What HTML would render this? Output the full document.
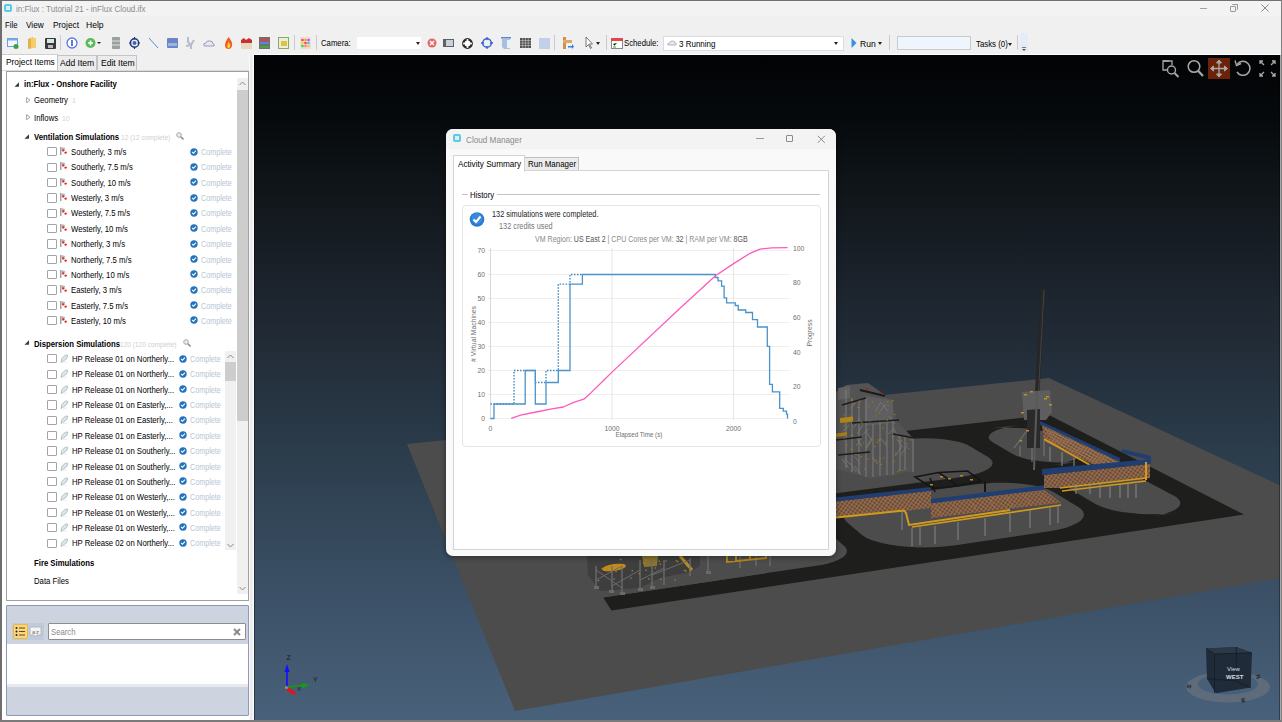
<!DOCTYPE html>
<html><head><meta charset="utf-8">
<style>
*{margin:0;padding:0;box-sizing:border-box}
html,body{width:1282px;height:722px;overflow:hidden;background:#f0f0f0;font-family:"Liberation Sans",sans-serif;font-size:9px;color:#000}
.a{position:absolute}
.t{position:absolute;white-space:nowrap;line-height:1;font-size:9px;transform-origin:0 0;transform:scaleX(.86)}
.b{font-weight:bold}
.sep{position:absolute;top:35px;width:1px;height:15px;background:#c8ccd2}
.ic{position:absolute;top:37px}
</style></head><body>
<!-- window frame -->
<div class="a" style="left:0;top:0;width:1282px;height:1px;background:#707070"></div>
<div class="a" style="left:0;top:0;width:2px;height:722px;background:#6e6e6e"></div>
<div class="a" style="left:1281px;top:0;width:1px;height:722px;background:#8a8a8a"></div>
<div class="a" style="left:0;top:720px;width:1282px;height:2px;background:#7a7a7a"></div>
<!-- title bar -->
<div class="a" style="left:2px;top:1px;width:1279px;height:15px;background:#f3f3f3"></div>
<div class="a" style="left:4px;top:4px;width:8px;height:8px;border:2px solid #5cc8ea;border-radius:2px;background:#d8f0e8"></div>
<div class="t" style="left:15.5px;top:4.5px;color:#8c8c8c;transform:scaleX(.89)">in:Flux : Tutorial 21 - inFlux Cloud.ifx</div>
<div class="a" style="left:1200px;top:7.5px;width:7px;height:1px;background:#a4a4a4"></div>
<div class="a" style="left:1230px;top:5.5px;width:6px;height:6px;border:1px solid #9a9a9a;border-radius:1px"></div>
<div class="a" style="left:1232px;top:4px;width:5.5px;height:5.5px;border-top:1px solid #9a9a9a;border-right:1px solid #9a9a9a;border-radius:1px"></div>
<svg class="a" style="left:1261px;top:4px" width="9" height="9"><path d="M0.5 0.5L7.5 7.5M7.5 0.5L0.5 7.5" stroke="#8a8a8a" stroke-width="1"/></svg>
<!-- menu -->
<div class="t" style="left:5px;top:21px">File</div>
<div class="t" style="left:26px;top:21px;transform:scaleX(.92)">View</div>
<div class="t" style="left:52.5px;top:21px;transform:scaleX(.93)">Project</div>
<div class="t" style="left:86px;top:21px;transform:scaleX(.95)">Help</div>
<!-- toolbar -->
<svg class="ic" style="left:7px" width="12" height="12"><rect x="0.5" y="1.5" width="10" height="8" fill="#f4f8fc" stroke="#6a9ee0"/><rect x="0.5" y="1.5" width="10" height="2" fill="#7aa8e6"/><circle cx="9" cy="9.5" r="2.5" fill="#3fa040"/></svg>
<svg class="ic" style="left:27px" width="10" height="12"><path d="M1 2L6 0V11L1 12Z" fill="#e3b04a"/><path d="M4 1H9V11H4Z" fill="#f3ce6c"/></svg>
<svg class="ic" style="left:45px;top:38px" width="11" height="11"><rect x="0" y="0" width="11" height="11" rx="1" fill="#3a3a3a"/><rect x="2" y="1" width="7" height="4" fill="#d8e6ea"/><rect x="3" y="7" width="5" height="3" fill="#bbb"/></svg>
<div class="sep" style="left:60px"></div>
<svg class="ic" style="left:66px;top:37px" width="12" height="12"><circle cx="6" cy="6" r="5" fill="#fff" stroke="#5a78e8" stroke-width="1.3"/><path d="M6 3V9" stroke="#2040c0" stroke-width="1.4"/></svg>
<svg class="ic" style="left:85px;top:37px" width="16" height="12"><circle cx="5.5" cy="6" r="5" fill="#5cb85c"/><path d="M5.5 3.5V8.5M3 6H8" stroke="#fff" stroke-width="1.6"/><path d="M12 5H16L14 7Z" fill="#222"/></svg>
<svg class="ic" style="left:111px" width="10" height="12"><rect x="1" y="0" width="8" height="12" rx="1" fill="#9aa0a0"/><path d="M1 4H9M1 8H9" stroke="#e0e0e0"/></svg>
<svg class="ic" style="left:129px" width="11" height="12"><circle cx="5.5" cy="6" r="4.2" fill="none" stroke="#233a70" stroke-width="1.4"/><circle cx="5.5" cy="6" r="2" fill="#3b62c8"/><path d="M5.5 0V2.5M5.5 9.5V12M0 6H2.5M8.5 6H11" stroke="#233a70" stroke-width="1.2"/></svg>
<svg class="ic" style="left:148px" width="11" height="12"><path d="M1 1L10 11" stroke="#5a8ad8" stroke-width="1"/></svg>
<svg class="ic" style="left:167px;top:38px" width="11" height="10"><rect x="0" y="0" width="11" height="10" rx="1" fill="#6a86c8"/><rect x="1" y="5" width="9" height="3" fill="#9cb2e0"/></svg>
<svg class="ic" style="left:185px" width="11" height="12"><path d="M3 0V5L6 8L9 3M6 8V12M1 9L6 8" stroke="#b8bcc8" stroke-width="2" fill="none"/></svg>
<svg class="ic" style="left:203px;top:40px" width="12" height="7"><path d="M1 6Q0 3 3 3Q4 0 7 1Q10 1 10 4Q12 4 11 6Z" fill="#e8e8f0" stroke="#9a9ab8"/></svg>
<svg class="ic" style="left:224px" width="9" height="12"><path d="M4.5 0Q9 5 8 9Q7 12 4.5 12Q1 12 1 8Q1 5 4.5 0Z" fill="#f06020"/><path d="M4.5 5Q7 8 6 10Q5 11.5 4 11Q2.5 10 4.5 5Z" fill="#ffd040"/></svg>
<svg class="ic" style="left:241px" width="11" height="12"><path d="M0 3L3 1L5 3L8 1L11 3V12H0Z" fill="#c83030"/><rect x="0" y="6" width="11" height="6" fill="#e8d8c0"/></svg>
<svg class="ic" style="left:259px" width="11" height="12"><rect x="0" y="0" width="11" height="12" fill="#707070"/><rect x="1" y="2" width="9" height="2" fill="#e04040"/><rect x="1" y="5" width="9" height="2" fill="#6080e0"/><rect x="1" y="9" width="9" height="2" fill="#40a840"/></svg>
<svg class="ic" style="left:278px" width="11" height="12"><rect x="0.5" y="0.5" width="10" height="11" fill="#e8f0d8" stroke="#8aa86a"/><rect x="3" y="4" width="6" height="5" fill="#e8c040"/></svg>
<div class="sep" style="left:294px"></div>
<svg class="ic" style="left:300px;top:37px" width="11" height="12"><rect x="0" y="0" width="11" height="12" fill="#e8e0d8"/><circle cx="2.5" cy="3" r="1.3" fill="#ff4060"/><circle cx="5.5" cy="3" r="1.3" fill="#ffa020"/><circle cx="8.5" cy="3" r="1.3" fill="#e040e0"/><circle cx="2.5" cy="6" r="1.3" fill="#ffd020"/><circle cx="5.5" cy="6" r="1.3" fill="#ff4040"/><circle cx="8.5" cy="6" r="1.3" fill="#40c0ff"/><circle cx="2.5" cy="9" r="1.3" fill="#40d040"/><circle cx="5.5" cy="9" r="1.3" fill="#ff8080"/><circle cx="8.5" cy="9" r="1.3" fill="#ffc040"/></svg>
<div class="sep" style="left:316px"></div>
<div class="t" style="left:321px;top:39px">Camera:</div>
<div class="a" style="left:356px;top:36px;width:66px;height:14px;background:#fff;border:1px solid #f0f0f0"></div>
<div class="a" style="left:416px;top:42px;width:0;height:0;border-left:2.5px solid transparent;border-right:2.5px solid transparent;border-top:3px solid #222"></div>
<svg class="ic" style="left:427px;top:38px" width="10" height="10"><circle cx="5" cy="5" r="4.5" fill="#e06a6a"/><path d="M3 3L7 7M7 3L3 7" stroke="#fff" stroke-width="1.3"/></svg>
<svg class="ic" style="left:443px;top:38px" width="11" height="10"><rect x="0" y="1" width="11" height="8" fill="#606060"/><rect x="3" y="2" width="7" height="6" fill="#c8d0dc"/></svg>
<svg class="ic" style="left:461.5px;top:37.5px" width="11" height="11"><circle cx="5.5" cy="5.5" r="4.2" fill="#fff" stroke="#2a2a2a" stroke-width="2.4"/><circle cx="5.5" cy="2" r="1" fill="#fff"/><circle cx="5.5" cy="9" r="1" fill="#fff"/><circle cx="2" cy="5.5" r="1" fill="#fff"/><circle cx="9" cy="5.5" r="1" fill="#fff"/></svg>
<svg class="ic" style="left:481px;top:37px" width="12" height="12"><circle cx="6" cy="6" r="4.3" fill="none" stroke="#3b62d8" stroke-width="1.5"/><path d="M6 0V3M6 9V12M0 6H3M9 6H12" stroke="#3b62d8" stroke-width="1.3"/></svg>
<svg class="ic" style="left:501px" width="11" height="12"><rect x="0" y="0" width="10" height="1.5" fill="#5a86d0"/><path d="M1 2H9V12H3L1 10Z" fill="#a8c0e0"/><rect x="6" y="3" width="3" height="8" fill="#e8f0fa"/></svg>
<svg class="ic" style="left:520px;top:38px" width="11" height="10"><rect x="0" y="0" width="11" height="10" fill="#505050"/><path d="M0 2.5H11M0 5H11M0 7.5H11M2.75 0V10M5.5 0V10M8.25 0V10" stroke="#c8c8c8" stroke-width=".6"/></svg>
<svg class="ic" style="left:539px;top:38px" width="11" height="11"><rect x="0" y="0" width="11" height="11" fill="#c0d0e8"/></svg>
<div class="sep" style="left:554px"></div>
<svg class="ic" style="left:562px" width="12" height="12"><rect x="1" y="0" width="3" height="12" fill="#d09050"/><rect x="1" y="3" width="9" height="3" fill="#e0a868"/><path d="M6 9H10V7L12 9.5L10 12V10.5H6Z" fill="#3080e0"/></svg>
<svg class="ic" style="left:585px" width="8" height="12"><path d="M1 0V10L3.5 7.5L5.5 11.5L6.5 11L4.5 7H7.5Z" fill="#fff" stroke="#555" stroke-width=".8"/></svg>
<div class="a" style="left:596px;top:42px;width:0;height:0;border-left:2.5px solid transparent;border-right:2.5px solid transparent;border-top:3px solid #222"></div>
<div class="sep" style="left:606px"></div>
<svg class="ic" style="left:611px" width="12" height="12"><rect x="0.5" y="1.5" width="11" height="10" fill="#fff" stroke="#888"/><rect x="0" y="1" width="12" height="3" fill="#e04848"/><path d="M2 7L3.5 8.5L5.5 6M2 10H5" stroke="#40a040" stroke-width="1"/></svg>
<div class="t" style="left:624px;top:39px">Schedule:</div>
<div class="a" style="left:663px;top:36px;width:181px;height:15px;background:#fff;border:1px solid #dcdcdc"></div>
<svg class="ic" style="left:667px;top:40px" width="10" height="6"><path d="M1 5Q0 3 2.5 3Q3 1 5.5 1Q8 1 8 3Q10 3 9 5Z" fill="#e8e8f0" stroke="#9a9ab8" stroke-width=".7"/></svg>
<div class="t" style="left:679px;top:39.5px;transform:scaleX(.89)">3 Running</div>
<div class="a" style="left:834px;top:42px;width:0;height:0;border-left:2.5px solid transparent;border-right:2.5px solid transparent;border-top:3px solid #222"></div>
<svg class="ic" style="left:851px;top:37.5px" width="6" height="10"><path d="M0.5 0L5.5 5L0.5 10Z" fill="#3a90e0"/></svg>
<div class="t" style="left:860px;top:39.5px;transform:scaleX(.95)">Run</div>
<div class="a" style="left:878px;top:42px;width:0;height:0;border-left:2.5px solid transparent;border-right:2.5px solid transparent;border-top:3px solid #222"></div>
<div class="sep" style="left:889px"></div>
<div class="a" style="left:897px;top:36px;width:74px;height:14px;background:#eef5fc;border:1px solid #c8ccd0"></div>
<div class="t" style="left:976px;top:40px;transform:scaleX(.87)">Tasks (0)</div>
<div class="a" style="left:1007.5px;top:42.5px;width:0;height:0;border-left:2.5px solid transparent;border-right:2.5px solid transparent;border-top:3px solid #222"></div>
<div class="sep" style="left:1017px"></div>
<div class="a" style="left:1020px;top:33px;width:8px;height:19px;background:#e4ecf6"></div>
<div class="a" style="left:1022px;top:47px;width:4px;height:1px;background:#777"></div>
<div class="a" style="left:1022px;top:49px;width:0;height:0;border-left:2px solid transparent;border-right:2px solid transparent;border-top:2px solid #555"></div>

<div class="a" style="left:2px;top:54px;width:56px;height:18px;background:#fff;border:1px solid #d0d0d0;border-bottom:none;border-left:none"></div>
<div class="a" style="left:57px;top:55px;width:40px;height:15px;background:#ececec;border:1px solid #c4c4c4;border-bottom:none"></div>
<div class="a" style="left:97px;top:55px;width:40px;height:15px;background:#ececec;border:1px solid #c4c4c4;border-bottom:none"></div>
<div class="t" style="left:6px;top:57px;font-size:9.5px;transform:scaleX(.88)">Project Items</div>
<div class="t" style="left:59.5px;top:57.5px;font-size:9.5px;transform:scaleX(.9)">Add Item</div>
<div class="t" style="left:100.5px;top:57.5px;font-size:9.5px;transform:scaleX(.9)">Edit Item</div>
<div class="a" style="left:2px;top:70px;width:248px;height:535px;background:#fff;border-top:1px solid #dadada"></div>
<div class="a" style="left:6px;top:71px;width:243px;height:530px;background:#fff"></div>
<div class="a" style="left:249px;top:55px;width:5px;height:665px;background:linear-gradient(90deg,#fff,#e6e6e6 40%,#f2f2f2 70%,#fff)"></div><div class="a" style="left:254px;top:55px;width:1px;height:665px;background:rgba(0,0,0,.4);z-index:5"></div>
<div class="a" style="left:2px;top:600px;width:247px;height:120px;background:#fff"></div>
<div class="a" style="left:6px;top:71px;width:243px;height:530px;border:1px solid #a0a0a0"></div>
<div class="a" style="left:237px;top:78px;width:11px;height:516px;background:#f0f0f0"></div>
<div class="a" style="left:237px;top:90px;width:11px;height:331px;background:#cdcdcd"></div>
<svg class="a" style="left:239px;top:81px" width="7" height="5"><path d="M0.5 4L3.5 1L6.5 4" stroke="#888" fill="none"/></svg>
<svg class="a" style="left:239px;top:586px" width="7" height="5"><path d="M0.5 1L3.5 4L6.5 1" stroke="#888" fill="none"/></svg>
<svg class="a" style="left:14.3px;top:81.5px" width="6" height="6"><path d="M5 0.3V4.8H0.5Z" fill="#3a3a3a"/></svg>
<div class="t b" style="left:24px;top:80px">in:Flux - Onshore Facility</div>
<svg class="a" style="left:25.8px;top:96.8px" width="5" height="7"><path d="M0.6 0.6L4 3.2L0.6 5.8Z" fill="#fff" stroke="#a4a4a4" stroke-width="1"/></svg>
<div class="t" style="left:34px;top:96px">Geometry</div><div class="t" style="left:72px;top:97px;font-size:8px;color:#d4d4d4">1</div>
<svg class="a" style="left:25.8px;top:114px" width="5" height="7"><path d="M0.6 0.6L4 3.2L0.6 5.8Z" fill="#fff" stroke="#a4a4a4" stroke-width="1"/></svg>
<div class="t" style="left:34px;top:114px">Inflows</div><div class="t" style="left:62px;top:115px;font-size:8px;color:#d4d4d4">10</div>
<svg class="a" style="left:24px;top:134px" width="6" height="6"><path d="M5 0.3V4.8H0.5Z" fill="#3a3a3a"/></svg>
<div class="t b" style="left:34px;top:133px">Ventilation Simulations</div><div class="t" style="left:121px;top:133.5px;font-size:8px;color:#cfcfcf;transform:scaleX(.82)">12 (12 complete)</div><svg class="a" style="left:176px;top:132px" width="8" height="8"><circle cx="3" cy="3" r="2.3" fill="#e8eef4" stroke="#a0a8b0" stroke-width="1"/><path d="M4.8 4.8L7.5 7.5" stroke="#909090" stroke-width="1.6"/></svg>
<div class="a" style="left:47px;top:147.2px;width:9.6px;height:9.3px;border:1px solid #a4a4a4;border-radius:1px;background:#fff"></div>
<svg class="a" style="left:60px;top:147.0px" width="8" height="9"><rect x="0.2" y="0" width="1.2" height="8" fill="#8a8a8a"/><path d="M1.4 0.2L4.5 0.8L5.5 2.2L1.4 3.2Z" fill="#b4b4b4"/><circle cx="3.3" cy="3.4" r="1.2" fill="#e02828"/><circle cx="5.6" cy="5.6" r="1.2" fill="#e02828"/><circle cx="4.5" cy="4.5" r=".6" fill="#fff"/></svg>
<div class="t" style="left:71px;top:148.0px">Southerly, 3 m/s</div>
<svg class="a" style="left:190px;top:147.5px" width="8" height="8"><circle cx="4" cy="4" r="3.7" fill="#2474bc"/><path d="M2.2 4L3.5 5.3L5.9 2.7" stroke="#fff" stroke-width="1.1" fill="none"/></svg>
<div class="t" style="left:201px;top:148.0px;color:#b6c5d5;transform:scaleX(.8)">Complete</div>
<div class="a" style="left:47px;top:162.6px;width:9.6px;height:9.3px;border:1px solid #a4a4a4;border-radius:1px;background:#fff"></div>
<svg class="a" style="left:60px;top:162.36px" width="8" height="9"><rect x="0.2" y="0" width="1.2" height="8" fill="#8a8a8a"/><path d="M1.4 0.2L4.5 0.8L5.5 2.2L1.4 3.2Z" fill="#b4b4b4"/><circle cx="3.3" cy="3.4" r="1.2" fill="#e02828"/><circle cx="5.6" cy="5.6" r="1.2" fill="#e02828"/><circle cx="4.5" cy="4.5" r=".6" fill="#fff"/></svg>
<div class="t" style="left:71px;top:163.4px">Southerly, 7.5 m/s</div>
<svg class="a" style="left:190px;top:162.86px" width="8" height="8"><circle cx="4" cy="4" r="3.7" fill="#2474bc"/><path d="M2.2 4L3.5 5.3L5.9 2.7" stroke="#fff" stroke-width="1.1" fill="none"/></svg>
<div class="t" style="left:201px;top:163.4px;color:#b6c5d5;transform:scaleX(.8)">Complete</div>
<div class="a" style="left:47px;top:177.9px;width:9.6px;height:9.3px;border:1px solid #a4a4a4;border-radius:1px;background:#fff"></div>
<svg class="a" style="left:60px;top:177.72px" width="8" height="9"><rect x="0.2" y="0" width="1.2" height="8" fill="#8a8a8a"/><path d="M1.4 0.2L4.5 0.8L5.5 2.2L1.4 3.2Z" fill="#b4b4b4"/><circle cx="3.3" cy="3.4" r="1.2" fill="#e02828"/><circle cx="5.6" cy="5.6" r="1.2" fill="#e02828"/><circle cx="4.5" cy="4.5" r=".6" fill="#fff"/></svg>
<div class="t" style="left:71px;top:178.7px">Southerly, 10 m/s</div>
<svg class="a" style="left:190px;top:178.22px" width="8" height="8"><circle cx="4" cy="4" r="3.7" fill="#2474bc"/><path d="M2.2 4L3.5 5.3L5.9 2.7" stroke="#fff" stroke-width="1.1" fill="none"/></svg>
<div class="t" style="left:201px;top:178.7px;color:#b6c5d5;transform:scaleX(.8)">Complete</div>
<div class="a" style="left:47px;top:193.3px;width:9.6px;height:9.3px;border:1px solid #a4a4a4;border-radius:1px;background:#fff"></div>
<svg class="a" style="left:60px;top:193.07999999999998px" width="8" height="9"><rect x="0.2" y="0" width="1.2" height="8" fill="#8a8a8a"/><path d="M1.4 0.2L4.5 0.8L5.5 2.2L1.4 3.2Z" fill="#b4b4b4"/><circle cx="3.3" cy="3.4" r="1.2" fill="#e02828"/><circle cx="5.6" cy="5.6" r="1.2" fill="#e02828"/><circle cx="4.5" cy="4.5" r=".6" fill="#fff"/></svg>
<div class="t" style="left:71px;top:194.1px">Westerly, 3 m/s</div>
<svg class="a" style="left:190px;top:193.57999999999998px" width="8" height="8"><circle cx="4" cy="4" r="3.7" fill="#2474bc"/><path d="M2.2 4L3.5 5.3L5.9 2.7" stroke="#fff" stroke-width="1.1" fill="none"/></svg>
<div class="t" style="left:201px;top:194.1px;color:#b6c5d5;transform:scaleX(.8)">Complete</div>
<div class="a" style="left:47px;top:208.6px;width:9.6px;height:9.3px;border:1px solid #a4a4a4;border-radius:1px;background:#fff"></div>
<svg class="a" style="left:60px;top:208.44px" width="8" height="9"><rect x="0.2" y="0" width="1.2" height="8" fill="#8a8a8a"/><path d="M1.4 0.2L4.5 0.8L5.5 2.2L1.4 3.2Z" fill="#b4b4b4"/><circle cx="3.3" cy="3.4" r="1.2" fill="#e02828"/><circle cx="5.6" cy="5.6" r="1.2" fill="#e02828"/><circle cx="4.5" cy="4.5" r=".6" fill="#fff"/></svg>
<div class="t" style="left:71px;top:209.4px">Westerly, 7.5 m/s</div>
<svg class="a" style="left:190px;top:208.94px" width="8" height="8"><circle cx="4" cy="4" r="3.7" fill="#2474bc"/><path d="M2.2 4L3.5 5.3L5.9 2.7" stroke="#fff" stroke-width="1.1" fill="none"/></svg>
<div class="t" style="left:201px;top:209.4px;color:#b6c5d5;transform:scaleX(.8)">Complete</div>
<div class="a" style="left:47px;top:224.0px;width:9.6px;height:9.3px;border:1px solid #a4a4a4;border-radius:1px;background:#fff"></div>
<svg class="a" style="left:60px;top:223.8px" width="8" height="9"><rect x="0.2" y="0" width="1.2" height="8" fill="#8a8a8a"/><path d="M1.4 0.2L4.5 0.8L5.5 2.2L1.4 3.2Z" fill="#b4b4b4"/><circle cx="3.3" cy="3.4" r="1.2" fill="#e02828"/><circle cx="5.6" cy="5.6" r="1.2" fill="#e02828"/><circle cx="4.5" cy="4.5" r=".6" fill="#fff"/></svg>
<div class="t" style="left:71px;top:224.8px">Westerly, 10 m/s</div>
<svg class="a" style="left:190px;top:224.3px" width="8" height="8"><circle cx="4" cy="4" r="3.7" fill="#2474bc"/><path d="M2.2 4L3.5 5.3L5.9 2.7" stroke="#fff" stroke-width="1.1" fill="none"/></svg>
<div class="t" style="left:201px;top:224.8px;color:#b6c5d5;transform:scaleX(.8)">Complete</div>
<div class="a" style="left:47px;top:239.4px;width:9.6px;height:9.3px;border:1px solid #a4a4a4;border-radius:1px;background:#fff"></div>
<svg class="a" style="left:60px;top:239.16px" width="8" height="9"><rect x="0.2" y="0" width="1.2" height="8" fill="#8a8a8a"/><path d="M1.4 0.2L4.5 0.8L5.5 2.2L1.4 3.2Z" fill="#b4b4b4"/><circle cx="3.3" cy="3.4" r="1.2" fill="#e02828"/><circle cx="5.6" cy="5.6" r="1.2" fill="#e02828"/><circle cx="4.5" cy="4.5" r=".6" fill="#fff"/></svg>
<div class="t" style="left:71px;top:240.2px">Northerly, 3 m/s</div>
<svg class="a" style="left:190px;top:239.66px" width="8" height="8"><circle cx="4" cy="4" r="3.7" fill="#2474bc"/><path d="M2.2 4L3.5 5.3L5.9 2.7" stroke="#fff" stroke-width="1.1" fill="none"/></svg>
<div class="t" style="left:201px;top:240.2px;color:#b6c5d5;transform:scaleX(.8)">Complete</div>
<div class="a" style="left:47px;top:254.7px;width:9.6px;height:9.3px;border:1px solid #a4a4a4;border-radius:1px;background:#fff"></div>
<svg class="a" style="left:60px;top:254.51999999999998px" width="8" height="9"><rect x="0.2" y="0" width="1.2" height="8" fill="#8a8a8a"/><path d="M1.4 0.2L4.5 0.8L5.5 2.2L1.4 3.2Z" fill="#b4b4b4"/><circle cx="3.3" cy="3.4" r="1.2" fill="#e02828"/><circle cx="5.6" cy="5.6" r="1.2" fill="#e02828"/><circle cx="4.5" cy="4.5" r=".6" fill="#fff"/></svg>
<div class="t" style="left:71px;top:255.5px">Northerly, 7.5 m/s</div>
<svg class="a" style="left:190px;top:255.01999999999998px" width="8" height="8"><circle cx="4" cy="4" r="3.7" fill="#2474bc"/><path d="M2.2 4L3.5 5.3L5.9 2.7" stroke="#fff" stroke-width="1.1" fill="none"/></svg>
<div class="t" style="left:201px;top:255.5px;color:#b6c5d5;transform:scaleX(.8)">Complete</div>
<div class="a" style="left:47px;top:270.1px;width:9.6px;height:9.3px;border:1px solid #a4a4a4;border-radius:1px;background:#fff"></div>
<svg class="a" style="left:60px;top:269.88px" width="8" height="9"><rect x="0.2" y="0" width="1.2" height="8" fill="#8a8a8a"/><path d="M1.4 0.2L4.5 0.8L5.5 2.2L1.4 3.2Z" fill="#b4b4b4"/><circle cx="3.3" cy="3.4" r="1.2" fill="#e02828"/><circle cx="5.6" cy="5.6" r="1.2" fill="#e02828"/><circle cx="4.5" cy="4.5" r=".6" fill="#fff"/></svg>
<div class="t" style="left:71px;top:270.9px">Northerly, 10 m/s</div>
<svg class="a" style="left:190px;top:270.38px" width="8" height="8"><circle cx="4" cy="4" r="3.7" fill="#2474bc"/><path d="M2.2 4L3.5 5.3L5.9 2.7" stroke="#fff" stroke-width="1.1" fill="none"/></svg>
<div class="t" style="left:201px;top:270.9px;color:#b6c5d5;transform:scaleX(.8)">Complete</div>
<div class="a" style="left:47px;top:285.4px;width:9.6px;height:9.3px;border:1px solid #a4a4a4;border-radius:1px;background:#fff"></div>
<svg class="a" style="left:60px;top:285.24px" width="8" height="9"><rect x="0.2" y="0" width="1.2" height="8" fill="#8a8a8a"/><path d="M1.4 0.2L4.5 0.8L5.5 2.2L1.4 3.2Z" fill="#b4b4b4"/><circle cx="3.3" cy="3.4" r="1.2" fill="#e02828"/><circle cx="5.6" cy="5.6" r="1.2" fill="#e02828"/><circle cx="4.5" cy="4.5" r=".6" fill="#fff"/></svg>
<div class="t" style="left:71px;top:286.2px">Easterly, 3 m/s</div>
<svg class="a" style="left:190px;top:285.74px" width="8" height="8"><circle cx="4" cy="4" r="3.7" fill="#2474bc"/><path d="M2.2 4L3.5 5.3L5.9 2.7" stroke="#fff" stroke-width="1.1" fill="none"/></svg>
<div class="t" style="left:201px;top:286.2px;color:#b6c5d5;transform:scaleX(.8)">Complete</div>
<div class="a" style="left:47px;top:300.8px;width:9.6px;height:9.3px;border:1px solid #a4a4a4;border-radius:1px;background:#fff"></div>
<svg class="a" style="left:60px;top:300.6px" width="8" height="9"><rect x="0.2" y="0" width="1.2" height="8" fill="#8a8a8a"/><path d="M1.4 0.2L4.5 0.8L5.5 2.2L1.4 3.2Z" fill="#b4b4b4"/><circle cx="3.3" cy="3.4" r="1.2" fill="#e02828"/><circle cx="5.6" cy="5.6" r="1.2" fill="#e02828"/><circle cx="4.5" cy="4.5" r=".6" fill="#fff"/></svg>
<div class="t" style="left:71px;top:301.6px">Easterly, 7.5 m/s</div>
<svg class="a" style="left:190px;top:301.1px" width="8" height="8"><circle cx="4" cy="4" r="3.7" fill="#2474bc"/><path d="M2.2 4L3.5 5.3L5.9 2.7" stroke="#fff" stroke-width="1.1" fill="none"/></svg>
<div class="t" style="left:201px;top:301.6px;color:#b6c5d5;transform:scaleX(.8)">Complete</div>
<div class="a" style="left:47px;top:316.2px;width:9.6px;height:9.3px;border:1px solid #a4a4a4;border-radius:1px;background:#fff"></div>
<svg class="a" style="left:60px;top:315.96px" width="8" height="9"><rect x="0.2" y="0" width="1.2" height="8" fill="#8a8a8a"/><path d="M1.4 0.2L4.5 0.8L5.5 2.2L1.4 3.2Z" fill="#b4b4b4"/><circle cx="3.3" cy="3.4" r="1.2" fill="#e02828"/><circle cx="5.6" cy="5.6" r="1.2" fill="#e02828"/><circle cx="4.5" cy="4.5" r=".6" fill="#fff"/></svg>
<div class="t" style="left:71px;top:317.0px">Easterly, 10 m/s</div>
<svg class="a" style="left:190px;top:316.46px" width="8" height="8"><circle cx="4" cy="4" r="3.7" fill="#2474bc"/><path d="M2.2 4L3.5 5.3L5.9 2.7" stroke="#fff" stroke-width="1.1" fill="none"/></svg>
<div class="t" style="left:201px;top:317.0px;color:#b6c5d5;transform:scaleX(.8)">Complete</div>
<svg class="a" style="left:24px;top:340px" width="6" height="6"><path d="M5 0.3V4.8H0.5Z" fill="#3a3a3a"/></svg>
<div class="t b" style="left:34px;top:340px">Dispersion Simulations</div><div class="t" style="left:120px;top:341px;font-size:8px;color:#cfcfcf;transform:scaleX(.82)">120 (120 complete)</div><svg class="a" style="left:183px;top:339px" width="8" height="8"><circle cx="3" cy="3" r="2.3" fill="#e8eef4" stroke="#a0a8b0" stroke-width="1"/><path d="M4.8 4.8L7.5 7.5" stroke="#909090" stroke-width="1.6"/></svg>
<div class="a" style="left:225px;top:351px;width:11px;height:199px;background:#f0f0f0"></div>
<div class="a" style="left:225px;top:362px;width:11px;height:19px;background:#cdcdcd"></div>
<svg class="a" style="left:227px;top:354px" width="7" height="5"><path d="M0.5 4L3.5 1L6.5 4" stroke="#888" fill="none"/></svg>
<svg class="a" style="left:227px;top:543px" width="7" height="5"><path d="M0.5 1L3.5 4L6.5 1" stroke="#888" fill="none"/></svg>
<div class="a" style="left:47px;top:354.2px;width:9.6px;height:9.3px;border:1px solid #a4a4a4;border-radius:1px;background:#fff"></div>
<svg class="a" style="left:60px;top:354.0px" width="9" height="9"><path d="M1 8.5Q0.5 4 5 1.5Q7.5 0.2 7.8 1.5Q7.5 5 3.5 7Q2.5 7.5 1 8.5Z" fill="#dce8ea" stroke="#9ab0b2" stroke-width=".7"/><path d="M3 8.2H7" stroke="#d8dcdc" stroke-width=".6"/></svg>
<div class="t" style="left:72px;top:355.0px">HP Release 01 on Northerly...</div>
<svg class="a" style="left:179px;top:354.5px" width="8" height="8"><circle cx="4" cy="4" r="3.7" fill="#2474bc"/><path d="M2.2 4L3.5 5.3L5.9 2.7" stroke="#fff" stroke-width="1.1" fill="none"/></svg>
<div class="t" style="left:190px;top:355.0px;color:#b6c5d5;transform:scaleX(.8)">Complete</div>
<div class="a" style="left:47px;top:369.6px;width:9.6px;height:9.3px;border:1px solid #a4a4a4;border-radius:1px;background:#fff"></div>
<svg class="a" style="left:60px;top:369.36px" width="9" height="9"><path d="M1 8.5Q0.5 4 5 1.5Q7.5 0.2 7.8 1.5Q7.5 5 3.5 7Q2.5 7.5 1 8.5Z" fill="#dce8ea" stroke="#9ab0b2" stroke-width=".7"/><path d="M3 8.2H7" stroke="#d8dcdc" stroke-width=".6"/></svg>
<div class="t" style="left:72px;top:370.4px">HP Release 01 on Northerly...</div>
<svg class="a" style="left:179px;top:369.86px" width="8" height="8"><circle cx="4" cy="4" r="3.7" fill="#2474bc"/><path d="M2.2 4L3.5 5.3L5.9 2.7" stroke="#fff" stroke-width="1.1" fill="none"/></svg>
<div class="t" style="left:190px;top:370.4px;color:#b6c5d5;transform:scaleX(.8)">Complete</div>
<div class="a" style="left:47px;top:384.9px;width:9.6px;height:9.3px;border:1px solid #a4a4a4;border-radius:1px;background:#fff"></div>
<svg class="a" style="left:60px;top:384.72px" width="9" height="9"><path d="M1 8.5Q0.5 4 5 1.5Q7.5 0.2 7.8 1.5Q7.5 5 3.5 7Q2.5 7.5 1 8.5Z" fill="#dce8ea" stroke="#9ab0b2" stroke-width=".7"/><path d="M3 8.2H7" stroke="#d8dcdc" stroke-width=".6"/></svg>
<div class="t" style="left:72px;top:385.7px">HP Release 01 on Northerly...</div>
<svg class="a" style="left:179px;top:385.22px" width="8" height="8"><circle cx="4" cy="4" r="3.7" fill="#2474bc"/><path d="M2.2 4L3.5 5.3L5.9 2.7" stroke="#fff" stroke-width="1.1" fill="none"/></svg>
<div class="t" style="left:190px;top:385.7px;color:#b6c5d5;transform:scaleX(.8)">Complete</div>
<div class="a" style="left:47px;top:400.3px;width:9.6px;height:9.3px;border:1px solid #a4a4a4;border-radius:1px;background:#fff"></div>
<svg class="a" style="left:60px;top:400.08px" width="9" height="9"><path d="M1 8.5Q0.5 4 5 1.5Q7.5 0.2 7.8 1.5Q7.5 5 3.5 7Q2.5 7.5 1 8.5Z" fill="#dce8ea" stroke="#9ab0b2" stroke-width=".7"/><path d="M3 8.2H7" stroke="#d8dcdc" stroke-width=".6"/></svg>
<div class="t" style="left:72px;top:401.1px">HP Release 01 on Easterly,...</div>
<svg class="a" style="left:179px;top:400.58px" width="8" height="8"><circle cx="4" cy="4" r="3.7" fill="#2474bc"/><path d="M2.2 4L3.5 5.3L5.9 2.7" stroke="#fff" stroke-width="1.1" fill="none"/></svg>
<div class="t" style="left:190px;top:401.1px;color:#b6c5d5;transform:scaleX(.8)">Complete</div>
<div class="a" style="left:47px;top:415.6px;width:9.6px;height:9.3px;border:1px solid #a4a4a4;border-radius:1px;background:#fff"></div>
<svg class="a" style="left:60px;top:415.44px" width="9" height="9"><path d="M1 8.5Q0.5 4 5 1.5Q7.5 0.2 7.8 1.5Q7.5 5 3.5 7Q2.5 7.5 1 8.5Z" fill="#dce8ea" stroke="#9ab0b2" stroke-width=".7"/><path d="M3 8.2H7" stroke="#d8dcdc" stroke-width=".6"/></svg>
<div class="t" style="left:72px;top:416.4px">HP Release 01 on Easterly,...</div>
<svg class="a" style="left:179px;top:415.94px" width="8" height="8"><circle cx="4" cy="4" r="3.7" fill="#2474bc"/><path d="M2.2 4L3.5 5.3L5.9 2.7" stroke="#fff" stroke-width="1.1" fill="none"/></svg>
<div class="t" style="left:190px;top:416.4px;color:#b6c5d5;transform:scaleX(.8)">Complete</div>
<div class="a" style="left:47px;top:431.0px;width:9.6px;height:9.3px;border:1px solid #a4a4a4;border-radius:1px;background:#fff"></div>
<svg class="a" style="left:60px;top:430.8px" width="9" height="9"><path d="M1 8.5Q0.5 4 5 1.5Q7.5 0.2 7.8 1.5Q7.5 5 3.5 7Q2.5 7.5 1 8.5Z" fill="#dce8ea" stroke="#9ab0b2" stroke-width=".7"/><path d="M3 8.2H7" stroke="#d8dcdc" stroke-width=".6"/></svg>
<div class="t" style="left:72px;top:431.8px">HP Release 01 on Easterly,...</div>
<svg class="a" style="left:179px;top:431.3px" width="8" height="8"><circle cx="4" cy="4" r="3.7" fill="#2474bc"/><path d="M2.2 4L3.5 5.3L5.9 2.7" stroke="#fff" stroke-width="1.1" fill="none"/></svg>
<div class="t" style="left:190px;top:431.8px;color:#b6c5d5;transform:scaleX(.8)">Complete</div>
<div class="a" style="left:47px;top:446.4px;width:9.6px;height:9.3px;border:1px solid #a4a4a4;border-radius:1px;background:#fff"></div>
<svg class="a" style="left:60px;top:446.15999999999997px" width="9" height="9"><path d="M1 8.5Q0.5 4 5 1.5Q7.5 0.2 7.8 1.5Q7.5 5 3.5 7Q2.5 7.5 1 8.5Z" fill="#dce8ea" stroke="#9ab0b2" stroke-width=".7"/><path d="M3 8.2H7" stroke="#d8dcdc" stroke-width=".6"/></svg>
<div class="t" style="left:72px;top:447.2px">HP Release 01 on Southerly...</div>
<svg class="a" style="left:179px;top:446.65999999999997px" width="8" height="8"><circle cx="4" cy="4" r="3.7" fill="#2474bc"/><path d="M2.2 4L3.5 5.3L5.9 2.7" stroke="#fff" stroke-width="1.1" fill="none"/></svg>
<div class="t" style="left:190px;top:447.2px;color:#b6c5d5;transform:scaleX(.8)">Complete</div>
<div class="a" style="left:47px;top:461.7px;width:9.6px;height:9.3px;border:1px solid #a4a4a4;border-radius:1px;background:#fff"></div>
<svg class="a" style="left:60px;top:461.52px" width="9" height="9"><path d="M1 8.5Q0.5 4 5 1.5Q7.5 0.2 7.8 1.5Q7.5 5 3.5 7Q2.5 7.5 1 8.5Z" fill="#dce8ea" stroke="#9ab0b2" stroke-width=".7"/><path d="M3 8.2H7" stroke="#d8dcdc" stroke-width=".6"/></svg>
<div class="t" style="left:72px;top:462.5px">HP Release 01 on Southerly...</div>
<svg class="a" style="left:179px;top:462.02px" width="8" height="8"><circle cx="4" cy="4" r="3.7" fill="#2474bc"/><path d="M2.2 4L3.5 5.3L5.9 2.7" stroke="#fff" stroke-width="1.1" fill="none"/></svg>
<div class="t" style="left:190px;top:462.5px;color:#b6c5d5;transform:scaleX(.8)">Complete</div>
<div class="a" style="left:47px;top:477.1px;width:9.6px;height:9.3px;border:1px solid #a4a4a4;border-radius:1px;background:#fff"></div>
<svg class="a" style="left:60px;top:476.88px" width="9" height="9"><path d="M1 8.5Q0.5 4 5 1.5Q7.5 0.2 7.8 1.5Q7.5 5 3.5 7Q2.5 7.5 1 8.5Z" fill="#dce8ea" stroke="#9ab0b2" stroke-width=".7"/><path d="M3 8.2H7" stroke="#d8dcdc" stroke-width=".6"/></svg>
<div class="t" style="left:72px;top:477.9px">HP Release 01 on Southerly...</div>
<svg class="a" style="left:179px;top:477.38px" width="8" height="8"><circle cx="4" cy="4" r="3.7" fill="#2474bc"/><path d="M2.2 4L3.5 5.3L5.9 2.7" stroke="#fff" stroke-width="1.1" fill="none"/></svg>
<div class="t" style="left:190px;top:477.9px;color:#b6c5d5;transform:scaleX(.8)">Complete</div>
<div class="a" style="left:47px;top:492.4px;width:9.6px;height:9.3px;border:1px solid #a4a4a4;border-radius:1px;background:#fff"></div>
<svg class="a" style="left:60px;top:492.24px" width="9" height="9"><path d="M1 8.5Q0.5 4 5 1.5Q7.5 0.2 7.8 1.5Q7.5 5 3.5 7Q2.5 7.5 1 8.5Z" fill="#dce8ea" stroke="#9ab0b2" stroke-width=".7"/><path d="M3 8.2H7" stroke="#d8dcdc" stroke-width=".6"/></svg>
<div class="t" style="left:72px;top:493.2px">HP Release 01 on Westerly,...</div>
<svg class="a" style="left:179px;top:492.74px" width="8" height="8"><circle cx="4" cy="4" r="3.7" fill="#2474bc"/><path d="M2.2 4L3.5 5.3L5.9 2.7" stroke="#fff" stroke-width="1.1" fill="none"/></svg>
<div class="t" style="left:190px;top:493.2px;color:#b6c5d5;transform:scaleX(.8)">Complete</div>
<div class="a" style="left:47px;top:507.8px;width:9.6px;height:9.3px;border:1px solid #a4a4a4;border-radius:1px;background:#fff"></div>
<svg class="a" style="left:60px;top:507.6px" width="9" height="9"><path d="M1 8.5Q0.5 4 5 1.5Q7.5 0.2 7.8 1.5Q7.5 5 3.5 7Q2.5 7.5 1 8.5Z" fill="#dce8ea" stroke="#9ab0b2" stroke-width=".7"/><path d="M3 8.2H7" stroke="#d8dcdc" stroke-width=".6"/></svg>
<div class="t" style="left:72px;top:508.6px">HP Release 01 on Westerly,...</div>
<svg class="a" style="left:179px;top:508.1px" width="8" height="8"><circle cx="4" cy="4" r="3.7" fill="#2474bc"/><path d="M2.2 4L3.5 5.3L5.9 2.7" stroke="#fff" stroke-width="1.1" fill="none"/></svg>
<div class="t" style="left:190px;top:508.6px;color:#b6c5d5;transform:scaleX(.8)">Complete</div>
<div class="a" style="left:47px;top:523.2px;width:9.6px;height:9.3px;border:1px solid #a4a4a4;border-radius:1px;background:#fff"></div>
<svg class="a" style="left:60px;top:522.96px" width="9" height="9"><path d="M1 8.5Q0.5 4 5 1.5Q7.5 0.2 7.8 1.5Q7.5 5 3.5 7Q2.5 7.5 1 8.5Z" fill="#dce8ea" stroke="#9ab0b2" stroke-width=".7"/><path d="M3 8.2H7" stroke="#d8dcdc" stroke-width=".6"/></svg>
<div class="t" style="left:72px;top:524.0px">HP Release 01 on Westerly,...</div>
<svg class="a" style="left:179px;top:523.46px" width="8" height="8"><circle cx="4" cy="4" r="3.7" fill="#2474bc"/><path d="M2.2 4L3.5 5.3L5.9 2.7" stroke="#fff" stroke-width="1.1" fill="none"/></svg>
<div class="t" style="left:190px;top:524.0px;color:#b6c5d5;transform:scaleX(.8)">Complete</div>
<div class="a" style="left:47px;top:538.5px;width:9.6px;height:9.3px;border:1px solid #a4a4a4;border-radius:1px;background:#fff"></div>
<svg class="a" style="left:60px;top:538.3199999999999px" width="9" height="9"><path d="M1 8.5Q0.5 4 5 1.5Q7.5 0.2 7.8 1.5Q7.5 5 3.5 7Q2.5 7.5 1 8.5Z" fill="#dce8ea" stroke="#9ab0b2" stroke-width=".7"/><path d="M3 8.2H7" stroke="#d8dcdc" stroke-width=".6"/></svg>
<div class="t" style="left:72px;top:539.3px">HP Release 02 on Northerly...</div>
<svg class="a" style="left:179px;top:538.8199999999999px" width="8" height="8"><circle cx="4" cy="4" r="3.7" fill="#2474bc"/><path d="M2.2 4L3.5 5.3L5.9 2.7" stroke="#fff" stroke-width="1.1" fill="none"/></svg>
<div class="t" style="left:190px;top:539.3px;color:#b6c5d5;transform:scaleX(.8)">Complete</div>
<div class="t b" style="left:34px;top:559px">Fire Simulations</div>
<div class="t" style="left:34px;top:577px">Data Files</div>
<div class="a" style="left:6px;top:605px;width:243px;height:111px;background:#cdd4e0;border:1px solid #8a9ab8;border-radius:1px"></div>
<div class="a" style="left:7px;top:644px;width:241px;height:40px;background:#fff"></div>
<div class="a" style="left:7px;top:684px;width:241px;height:3px;background:#e6eaee"></div>
<div class="a" style="left:12px;top:623px;width:32px;height:17px;background:#bfcadb"></div>
<div class="a" style="left:13px;top:624px;width:15px;height:15px;background:#ffd677;border:1px solid #e8b850;border-radius:2px"></div>
<svg class="a" style="left:15px;top:626px" width="11" height="11"><circle cx="1.5" cy="2" r="1" fill="#222"/><circle cx="1.5" cy="5.5" r="1" fill="#222"/><circle cx="1.5" cy="9" r="1" fill="#222"/><path d="M4 2H10M4 5.5H10M4 9H10" stroke="#5a4a30" stroke-width="1.2"/></svg>
<svg class="a" style="left:29px;top:625px" width="13" height="13"><path d="M1 2H12V10H8L6.5 12L5 10H1Z" fill="#f4f4f4" stroke="#b0b0b0" stroke-width=".8"/><text x="3" y="8.5" font-size="6" font-family="Liberation Sans" fill="#707070">a</text><text x="7" y="8.5" font-size="6" font-family="Liberation Sans" fill="#707070">z</text></svg>
<div class="a" style="left:48px;top:623px;width:198px;height:17px;background:#fff;border:1px solid #8c8c8c;border-radius:1px"></div>
<div class="t" style="left:51px;top:628px;color:#8a8a8a">Search</div>
<svg class="a" style="left:233px;top:628px" width="8" height="8"><path d="M1 1L7 7M7 1L1 7" stroke="#8a8a8a" stroke-width="2"/></svg>
<div class="a" style="left:254px;top:54px;width:1026px;height:1px;background:#fff"></div>
<div class="a" style="left:254px;top:55px;width:1026px;height:665px;overflow:hidden;background:linear-gradient(#020304 0%,#060a0d 9.9%,#0f1418 18.9%,#1e2630 37.6%,#2b3c4b 59.5%,#3a4f64 79.1%,#475f78 97.7%,#48617a 100%)">
<svg width="1026" height="665" style="position:absolute;left:0;top:0">
<path d="M261.0 656.0 L1171.0 498.0 L795.0 323.0 L153.0 389.0Z" fill="#4c4c4c"/>
<path d="M357.5 555.6 L990.0 459.6 L794.4 359.8 L404.6 404.1 L511.2 518.4 L349.2 542.4Z" fill="#1e1e1c"/>
<path d="M349.2 542.4 L562.3 510.8 L568.9 509.7 L574.9 508.2 L580.3 506.5 L584.8 504.6 L588.5 502.5 L591.1 500.3 L592.6 498.1 L593.0 495.8 L592.4 493.7 L590.7 491.6 L560.4 464.6 L557.9 462.9 L554.6 461.4 L550.4 460.1 L545.5 459.0 L540.0 458.3 L534.0 457.7 L527.7 457.5 L521.2 457.6 L514.7 458.0 L508.4 458.7 L312.9 484.5Z" fill="#4c4c4c"/>
<path d="M607.1 479.3 L611.7 482.4 L618.0 485.2 L625.7 487.6 L634.8 489.6 L645.0 491.1 L655.9 492.1 L667.4 492.5 L679.0 492.3 L690.5 491.5 L701.6 490.2 L795.2 476.3 L803.8 474.8 L811.4 472.9 L817.9 470.6 L823.1 468.1 L826.9 465.4 L829.2 462.6 L830.0 459.7 L829.3 456.8 L827.1 454.0 L823.5 451.4 L799.9 437.2 L795.3 434.9 L789.5 432.9 L782.8 431.1 L775.3 429.7 L767.1 428.7 L758.4 428.0 L749.4 427.7 L740.4 427.8 L731.5 428.4 L723.0 429.3 L635.9 440.7 L626.3 442.2 L617.4 444.2 L609.4 446.5 L602.6 449.1 L597.1 452.0 L593.1 455.1 L590.7 458.3 L590.0 461.6 L591.0 464.9 L593.8 468.0Z" fill="#4c4c4c"/>
<path d="M841.4 448.9 L846.3 451.3 L852.5 453.5 L859.8 455.4 L868.0 456.9 L876.9 458.1 L886.2 458.9 L895.8 459.2 L905.3 459.0 L914.5 458.4 L923.2 457.4 L899.8 460.9 L906.7 459.6 L912.8 458.1 L917.9 456.2 L921.8 454.2 L924.6 451.9 L926.1 449.6 L926.3 447.2 L925.2 444.9 L923.0 442.6 L919.5 440.4 L888.3 423.9 L884.1 422.0 L879.0 420.4 L873.0 418.9 L866.4 417.8 L859.4 416.9 L851.9 416.3 L844.3 416.1 L836.8 416.2 L829.4 416.6 L822.3 417.4 L844.2 414.5 L836.8 415.7 L830.1 417.2 L824.3 419.0 L819.6 421.1 L816.1 423.3 L813.9 425.8 L813.1 428.3 L813.7 430.8 L815.7 433.4 L819.1 435.8Z" fill="#4c4c4c"/>
<path d="M306.1 473.6 L704.6 422.4 L712.5 421.1 L719.7 419.6 L725.8 417.8 L730.9 415.7 L734.8 413.5 L737.3 411.2 L738.5 408.9 L738.3 406.5 L736.8 404.3 L734.0 402.1 L715.9 391.2 L712.1 389.3 L707.2 387.6 L701.4 386.2 L694.7 385.0 L687.4 384.1 L679.6 383.6 L671.5 383.3 L663.3 383.4 L655.1 383.8 L647.2 384.6 L277.1 427.5Z" fill="#4c4c4c"/>
<path d="M758.7 399.1 L762.8 401.0 L768.0 402.8 L774.3 404.4 L781.5 405.6 L789.3 406.6 L797.6 407.2 L806.2 407.5 L814.8 407.4 L823.2 406.9 L831.2 406.1 L797.0 410.5 L804.4 409.3 L811.1 407.8 L816.8 406.1 L821.3 404.2 L824.7 402.1 L826.7 399.9 L827.4 397.7 L826.8 395.5 L824.9 393.3 L821.8 391.3 L800.9 380.2 L796.9 378.4 L791.8 376.8 L785.8 375.4 L779.1 374.3 L771.9 373.5 L764.2 372.9 L756.3 372.7 L748.3 372.8 L740.4 373.2 L732.8 373.9 L765.0 370.2 L758.1 371.2 L751.8 372.4 L746.3 373.9 L741.7 375.6 L738.2 377.4 L735.8 379.4 L734.7 381.4 L734.9 383.5 L736.3 385.6 L739.0 387.6Z" fill="#4c4c4c"/>
</svg>
<svg width="1026" height="665" style="position:absolute;left:0;top:0"><defs><pattern id="hx" width="3.2" height="3.2" patternUnits="userSpaceOnUse" patternTransform="rotate(35)"><rect width="3.2" height="3.2" fill="#5e4838"/><path d="M0 1.6H3.2M1.6 0V3.2" stroke="#a87450" stroke-width=".9"/></pattern></defs><g transform="translate(-254,-55)">
<path d="M836 392 L846 385 L868 383 L885 395 L894 410 L897 421 L911 436 L914 438 L914 471 L893 475 L870 478 L840 470 L836 470Z" fill="#535353" />
<path d="M865 396 L893 400 L893 423 L865 426Z" fill="#5f5f5f" />
<path d="M838 388 L850 386 L850 398 L838 400Z" fill="#626262" />
<path d="M846 390V468" stroke="#7c7c7c" stroke-width="1"/>
<path d="M852 398V472" stroke="#7c7c7c" stroke-width="1"/>
<path d="M859 400V474" stroke="#7c7c7c" stroke-width="1"/>
<path d="M866 398V477" stroke="#7c7c7c" stroke-width="1"/>
<path d="M873 424V477" stroke="#7c7c7c" stroke-width="1"/>
<path d="M880 420V476" stroke="#7c7c7c" stroke-width="1"/>
<path d="M887 424V475" stroke="#7c7c7c" stroke-width="1"/>
<path d="M893 420V475" stroke="#7c7c7c" stroke-width="1"/>
<path d="M900 436V470" stroke="#7c7c7c" stroke-width="1"/>
<path d="M905 436V470" stroke="#7c7c7c" stroke-width="1"/>
<path d="M913 437V472" stroke="#7c7c7c" stroke-width="1"/>
<path d="M856.2 437.0l6 9.7" stroke="#7a7a7a" stroke-width=".8"/>
<path d="M872.2 439.5l-6 9.6" stroke="#7a7a7a" stroke-width=".8"/>
<path d="M871.9 437.5l-6 10.0" stroke="#7a7a7a" stroke-width=".8"/>
<path d="M872.0 456.9l6 7.6" stroke="#7a7a7a" stroke-width=".8"/>
<path d="M850.3 463.0l6 9.0" stroke="#7a7a7a" stroke-width=".8"/>
<path d="M885.7 404.4l-6 7.2" stroke="#7a7a7a" stroke-width=".8"/>
<path d="M842.1 458.9l6 8.4" stroke="#7a7a7a" stroke-width=".8"/>
<path d="M893.6 429.0l6 9.9" stroke="#7a7a7a" stroke-width=".8"/>
<path d="M849.1 424.9l-6 6.5" stroke="#7a7a7a" stroke-width=".8"/>
<path d="M854.8 465.7l6 9.1" stroke="#7a7a7a" stroke-width=".8"/>
<path d="M896.7 439.0l6 8.3" stroke="#7a7a7a" stroke-width=".8"/>
<path d="M901.5 446.4l-6 9.4" stroke="#7a7a7a" stroke-width=".8"/>
<path d="M907.4 445.6l-6 8.8" stroke="#7a7a7a" stroke-width=".8"/>
<path d="M862.2 436.8l-6 8.9" stroke="#7a7a7a" stroke-width=".8"/>
<path d="M854.4 456.5l6 7.1" stroke="#7a7a7a" stroke-width=".8"/>
<path d="M844.3 458.1l6 6.4" stroke="#7a7a7a" stroke-width=".8"/>
<path d="M894.4 427.9l-6 6.1" stroke="#7a7a7a" stroke-width=".8"/>
<path d="M869.0 428.2l-6 6.2" stroke="#7a7a7a" stroke-width=".8"/>
<path d="M881.8 403.1l6 8.2" stroke="#7a7a7a" stroke-width=".8"/>
<path d="M856.0 402.4l-6 6.3" stroke="#7a7a7a" stroke-width=".8"/>
<path d="M880.8 402.1l-6 9.9" stroke="#7a7a7a" stroke-width=".8"/>
<path d="M859.8 417.9l-6 9.9" stroke="#7a7a7a" stroke-width=".8"/>
<path d="M863.1 424.5l-6 9.6" stroke="#7a7a7a" stroke-width=".8"/>
<path d="M865.7 431.3l6 8.6" stroke="#7a7a7a" stroke-width=".8"/>
<path d="M880.5 438.0l6 7.7" stroke="#7a7a7a" stroke-width=".8"/>
<path d="M889.0 416.2l6 7.7" stroke="#7a7a7a" stroke-width=".8"/>
<path d="M842 405L866 398M852 423L899 420M836 440L862 437M893 434L914 438M838 455L870 452" stroke="#1c1c1c" stroke-width="1.6" fill="none"/>
<path d="M860 390L885 396" stroke="#1a1a1a" stroke-width="2.2"/>
<rect x="866" y="388" width="2" height="2" fill="#a02020"/><rect x="880" y="392" width="2" height="2" fill="#a02020"/>
<path d="M840 418 L853 416.5 L853 421.5 L840 423Z" fill="#b08418" />
<path d="M836 433.5 L847 432 L847 435.5 L836 437Z" fill="#a87c18" />
<rect x="860.1" y="420.4" width="1.3" height="1" fill="#9c7a1a"/>
<rect x="897.2" y="471.1" width="1.3" height="1" fill="#9c7a1a"/>
<rect x="868.4" y="441.6" width="1.1" height="1" fill="#9c7a1a"/>
<rect x="886.3" y="422.6" width="1.4" height="1" fill="#9c7a1a"/>
<rect x="906.2" y="443.1" width="1.3" height="1" fill="#9c7a1a"/>
<rect x="876.3" y="441.6" width="2.0" height="1" fill="#9c7a1a"/>
<rect x="843.5" y="425.3" width="1.6" height="1" fill="#9c7a1a"/>
<rect x="862.9" y="442.5" width="1.2" height="1" fill="#9c7a1a"/>
<rect x="855.0" y="454.1" width="1.8" height="1" fill="#9c7a1a"/>
<rect x="860.5" y="456.3" width="1.1" height="1" fill="#9c7a1a"/>
<rect x="898.9" y="469.9" width="1.7" height="1" fill="#9c7a1a"/>
<rect x="851.2" y="435.0" width="1.7" height="1" fill="#9c7a1a"/>
<rect x="860.9" y="422.3" width="1.7" height="1" fill="#9c7a1a"/>
<rect x="887.5" y="405.2" width="1.6" height="1" fill="#9c7a1a"/>
<rect x="908.4" y="447.9" width="1.2" height="1" fill="#9c7a1a"/>
<rect x="898.7" y="469.1" width="1.1" height="1" fill="#9c7a1a"/>
<rect x="893.9" y="414.1" width="1.6" height="1" fill="#9c7a1a"/>
<rect x="860.9" y="456.2" width="1.0" height="1" fill="#9c7a1a"/>
<rect x="900.5" y="440.5" width="1.9" height="1" fill="#9c7a1a"/>
<rect x="865.8" y="459.3" width="1.1" height="1" fill="#9c7a1a"/>
<rect x="885.4" y="441.6" width="1.4" height="1" fill="#9c7a1a"/>
<rect x="878.3" y="460.9" width="1.5" height="1" fill="#9c7a1a"/>
<rect x="886.4" y="419.5" width="1.6" height="1" fill="#9c7a1a"/>
<rect x="844.5" y="428.6" width="1.2" height="1" fill="#9c7a1a"/>
<rect x="875.4" y="459.6" width="1.6" height="1" fill="#9c7a1a"/>
<rect x="877.7" y="439.4" width="2.0" height="1" fill="#9c7a1a"/>
<rect x="892.2" y="400.4" width="1.5" height="1" fill="#9c7a1a"/>
<rect x="894.7" y="453.4" width="2.0" height="1" fill="#9c7a1a"/>
<rect x="880.1" y="463.8" width="1.9" height="1" fill="#9c7a1a"/>
<rect x="902.1" y="469.9" width="1.1" height="1" fill="#9c7a1a"/>
<rect x="859.1" y="400.6" width="1.8" height="1" fill="#9c7a1a"/>
<rect x="877.9" y="412.7" width="1.9" height="1" fill="#9c7a1a"/>
<rect x="872.1" y="401.7" width="1.5" height="1" fill="#9c7a1a"/>
<rect x="850.5" y="435.2" width="1.2" height="1" fill="#9c7a1a"/>
<rect x="843.4" y="437.7" width="1.1" height="1" fill="#9c7a1a"/>
<rect x="850.8" y="469.9" width="1.5" height="1" fill="#9c7a1a"/>
<rect x="857.5" y="407.0" width="1.9" height="1" fill="#9c7a1a"/>
<rect x="850.3" y="415.7" width="1.3" height="1" fill="#9c7a1a"/>
<rect x="882.0" y="427.6" width="1.8" height="1" fill="#9c7a1a"/>
<rect x="859.4" y="443.7" width="1.5" height="1" fill="#9c7a1a"/>
<rect x="845.6" y="421.9" width="1.8" height="1" fill="#9c7a1a"/>
<rect x="902.0" y="455.4" width="1.0" height="1" fill="#9c7a1a"/>
<rect x="845.5" y="433.7" width="1.0" height="1" fill="#9c7a1a"/>
<rect x="891.9" y="436.1" width="1.5" height="1" fill="#9c7a1a"/>
<rect x="853.0" y="403.3" width="1.4" height="1" fill="#9c7a1a"/>
<rect x="869.3" y="420.5" width="1.3" height="1" fill="#9c7a1a"/>
<rect x="850.9" y="398.3" width="1.7" height="1" fill="#9c7a1a"/>
<rect x="897.7" y="439.9" width="1.0" height="1" fill="#9c7a1a"/>
<rect x="874.3" y="446.1" width="1.5" height="1" fill="#9c7a1a"/>
<rect x="886.6" y="401.2" width="1.9" height="1" fill="#9c7a1a"/>
<rect x="845.7" y="444.4" width="1.8" height="1" fill="#9c7a1a"/>
<rect x="864.0" y="468.3" width="1.4" height="1" fill="#9c7a1a"/>
<rect x="843.3" y="414.2" width="1.3" height="1" fill="#9c7a1a"/>
<rect x="883.3" y="457.4" width="1.2" height="1" fill="#9c7a1a"/>
<rect x="851.1" y="400.1" width="1.3" height="1" fill="#9c7a1a"/>
<rect x="909.8" y="439.4" width="1.9" height="1" fill="#9c7a1a"/>
<rect x="850.5" y="449.1" width="1.9" height="1" fill="#9c7a1a"/>
<rect x="893.2" y="460.9" width="1.5" height="1" fill="#9c7a1a"/>
<rect x="868.4" y="406.0" width="1.3" height="1" fill="#9c7a1a"/>
<rect x="879.2" y="458.1" width="1.7" height="1" fill="#9c7a1a"/>
<rect x="875.1" y="415.5" width="1.4" height="1" fill="#9c7a1a"/>
<rect x="878.9" y="439.8" width="1.7" height="1" fill="#9c7a1a"/>
<rect x="868.3" y="458.6" width="1.3" height="1" fill="#9c7a1a"/>
<path d="M1041 289 L1045.5 289 L1039.5 392 L1035 392Z" fill="#262626" />
<path d="M1044 290L1038.5 392" stroke="#4a4a4a" stroke-width=".8"/>
<path d="M1022 392 L1050 390 L1052 412 L1046 420 L1024 420Z" fill="#5e5e5e" />
<path d="M1027 410 L1040 409 L1040 448 L1027 448Z" fill="#2a2a2a" />
<path d="M1037 392L1034 470" stroke="#5a5a5a" stroke-width="2"/>
<rect x="1024" y="394" width="3" height="1.5" fill="#c09020"/>
<rect x="1030" y="391" width="3" height="1.5" fill="#c09020"/>
<rect x="1046" y="396" width="3" height="1.5" fill="#c09020"/>
<rect x="1049" y="404" width="3" height="1.5" fill="#c09020"/>
<rect x="1021" y="412" width="3" height="1.5" fill="#c09020"/>
<rect x="1026" y="430" width="3" height="1.5" fill="#c09020"/>
<rect x="1019" y="440" width="3" height="1.5" fill="#c09020"/>
<rect x="1048" y="432" width="3" height="1.5" fill="#c09020"/>
<rect x="1044" y="398" width="3" height="1.5" fill="#c09020"/>
<path d="M1014 448L1026 432M1020 446V456M1032 448V462M1044 440V456" stroke="#7a7a7a" stroke-width="1"/>
<path d="M1040 421 L1120 458 L1120 462 L1040 425Z" fill="#213e72" />
<path d="M1042 425 L1120 462 L1100 468 L1044 441Z" fill="url(#hx)" />
<path d="M1045 429.0L1118 463.0" stroke="#a07a5a" stroke-width=".8"/>
<path d="M1047 432.5L1114 464.5" stroke="#a07a5a" stroke-width=".8"/>
<path d="M1049 436.0L1110 466.0" stroke="#a07a5a" stroke-width=".8"/>
<path d="M1051 439.5L1106 467.5" stroke="#a07a5a" stroke-width=".8"/>
<path d="M1044 439L1090 465" stroke="#d19a1c" stroke-width="2"/>
<path d="M1050 447V461" stroke="#8a8a8a" stroke-width="1"/>
<path d="M1062 452V466" stroke="#8a8a8a" stroke-width="1"/>
<path d="M1074 458V472" stroke="#8a8a8a" stroke-width="1"/>
<path d="M1088 464V478" stroke="#8a8a8a" stroke-width="1"/>
<path d="M1122 449 L1151 456 L1151 460 L1122 453Z" fill="#213e72" />
<path d="M1042 469 L1151 459 L1151 464 L1042 475Z" fill="#213e72" />
<path d="M1044 475 L1150 464 L1150 478 L1060 488 L1044 488Z" fill="url(#hx)" />
<path d="M1060 488L1146 478M1062 491L1146 481" stroke="#d19a1c" stroke-width="1.6"/>
<path d="M1146 462V480" stroke="#d19a1c" stroke-width="2"/>
<path d="M1076 484V494" stroke="#8a8a8a" stroke-width="1"/>
<path d="M1090 484V494" stroke="#8a8a8a" stroke-width="1"/>
<path d="M1100 484V498" stroke="#8a8a8a" stroke-width="1"/>
<path d="M1110 484V498" stroke="#8a8a8a" stroke-width="1"/>
<path d="M1120 484V498" stroke="#8a8a8a" stroke-width="1"/>
<path d="M1128 484V498" stroke="#8a8a8a" stroke-width="1"/>
<path d="M1136 484V498" stroke="#8a8a8a" stroke-width="1"/>
<path d="M836 497.5 L931 487 L931 491 L836 501.5Z" fill="#213e72" />
<path d="M836 501.5 L931 491 L931 508 L904 511 L836 518Z" fill="url(#hx)" />
<path d="M836 517.5L904 510.5L906 513L909 525L1010 510" stroke="#d19a1c" stroke-width="2" fill="none"/>
<path d="M931 499 L1044 485.3 L1044 490 L931 503.5Z" fill="#213e72" />
<path d="M931 503.5 L1044 490 L1061 502.7 L931 518Z" fill="url(#hx)" />
<path d="M912 527L1061 505" stroke="#d19a1c" stroke-width="1.6"/>
<path d="M935 505l6 10" stroke="#9a7050" stroke-width=".7"/>
<path d="M953 503l6 10" stroke="#9a7050" stroke-width=".7"/>
<path d="M971 501l6 10" stroke="#9a7050" stroke-width=".7"/>
<path d="M989 499l6 10" stroke="#9a7050" stroke-width=".7"/>
<path d="M1007 497l6 10" stroke="#9a7050" stroke-width=".7"/>
<path d="M1025 495l6 10" stroke="#9a7050" stroke-width=".7"/>
<path d="M902 512V530" stroke="#858585" stroke-width="1"/>
<path d="M912 528V546" stroke="#858585" stroke-width="1"/>
<path d="M920 527V545" stroke="#858585" stroke-width="1"/>
<path d="M935 526V544" stroke="#858585" stroke-width="1"/>
<path d="M958 522V540" stroke="#858585" stroke-width="1"/>
<path d="M985 518V536" stroke="#858585" stroke-width="1"/>
<path d="M1010 514V532" stroke="#858585" stroke-width="1"/>
<path d="M1030 510V528" stroke="#858585" stroke-width="1"/>
<path d="M1050 507V525" stroke="#858585" stroke-width="1"/>
<path d="M1058 505V523" stroke="#858585" stroke-width="1"/>
<path d="M915 477L938.5 472.5L967.6 471L981.4 481L957.9 485.7L933 488.5Z M938.5 472.5L957.9 485.7M930 478L935 492" stroke="#151515" stroke-width="1.6" fill="none"/>
<path d="M985 481V492" stroke="#151515" stroke-width="2"/>
<rect x="940" y="476" width="3" height="1.5" fill="#b08a20"/>
<rect x="948" y="478" width="3" height="1.5" fill="#b08a20"/>
<rect x="960" y="475" width="3" height="1.5" fill="#b08a20"/>
<rect x="970" y="479" width="3" height="1.5" fill="#b08a20"/>
<rect x="930" y="484" width="3" height="1.5" fill="#b08a20"/>
<path d="M587 556 L700 556 L700 566 L690 572 L660 578 L640 588 L600 591 L588 575Z" fill="#3e3e3e" />
<ellipse cx="614" cy="567.5" rx="12" ry="3.5" fill="#c08a1c" transform="rotate(-8 614 567.5)"/>
<path d="M642 556 L658 556 L657 566 L644 567Z" fill="#8a7430" />
<path d="M680 556L692 570" stroke="#b89020" stroke-width="3"/>
<path d="M596 566V586" stroke="#6e6e6e" stroke-width="1.3"/>
<path d="M612 566V590" stroke="#6e6e6e" stroke-width="1.3"/>
<path d="M622 566V594" stroke="#6e6e6e" stroke-width="1.3"/>
<path d="M640 560V590" stroke="#6e6e6e" stroke-width="1.3"/>
<path d="M652 560V588" stroke="#6e6e6e" stroke-width="1.3"/>
<path d="M664 560V585" stroke="#6e6e6e" stroke-width="1.3"/>
<path d="M690 558V576" stroke="#6e6e6e" stroke-width="1.3"/>
<path d="M708 556V572" stroke="#6e6e6e" stroke-width="1.3"/>
<path d="M740 556V568" stroke="#6e6e6e" stroke-width="1.3"/>
<path d="M756 556V566" stroke="#6e6e6e" stroke-width="1.3"/>
<path d="M770 556V566" stroke="#6e6e6e" stroke-width="1.3"/>
<path d="M596 580L622 566M612 586L640 570M640 580L664 568M596 570L622 588M652 575L690 560" stroke="#6a6a6a" stroke-width="1" fill="none"/>
<rect x="594" y="586" width="5" height="3" fill="#6a6a6a"/>
<rect x="609" y="590" width="5" height="3" fill="#6a6a6a"/>
<rect x="620" y="592" width="5" height="3" fill="#6a6a6a"/>
<rect x="638" y="588" width="5" height="3" fill="#6a6a6a"/>
<rect x="650" y="586" width="5" height="3" fill="#6a6a6a"/>
<rect x="706" y="571" width="5" height="3" fill="#6a6a6a"/>
<path d="M727 556V562L766 558V556M736 561V556M750 560V556" stroke="#b8881c" stroke-width="2" fill="none"/>
<rect x="601.5" y="568.1" width="1.5" height="1.2" fill="#a8861e"/>
<rect x="659.6" y="563.5" width="1.5" height="1.2" fill="#a8861e"/>
<rect x="619.9" y="559.0" width="1.5" height="1.2" fill="#a8861e"/>
<rect x="689.6" y="570.0" width="1.5" height="1.2" fill="#a8861e"/>
<rect x="642.9" y="562.5" width="1.5" height="1.2" fill="#a8861e"/>
<rect x="645.4" y="559.3" width="1.5" height="1.2" fill="#a8861e"/>
<rect x="645.3" y="569.7" width="1.5" height="1.2" fill="#a8861e"/>
<rect x="676.9" y="561.1" width="1.5" height="1.2" fill="#a8861e"/>
<rect x="597.7" y="580.0" width="1.5" height="1.2" fill="#a8861e"/>
<rect x="654.6" y="567.4" width="1.5" height="1.2" fill="#a8861e"/>
<rect x="660.0" y="578.7" width="1.5" height="1.2" fill="#a8861e"/>
<rect x="615.3" y="570.8" width="1.5" height="1.2" fill="#a8861e"/>
<rect x="683.9" y="569.8" width="1.5" height="1.2" fill="#a8861e"/>
<rect x="686.6" y="565.6" width="1.5" height="1.2" fill="#a8861e"/>
<rect x="613.5" y="578.4" width="1.5" height="1.2" fill="#a8861e"/>
<rect x="674.4" y="579.2" width="1.5" height="1.2" fill="#a8861e"/>
<rect x="631.5" y="570.1" width="1.5" height="1.2" fill="#a8861e"/>
<rect x="648.0" y="578.3" width="1.5" height="1.2" fill="#a8861e"/>
<rect x="658.6" y="560.6" width="1.5" height="1.2" fill="#a8861e"/>
<rect x="630.1" y="577.4" width="1.5" height="1.2" fill="#a8861e"/>
<rect x="606.3" y="568.5" width="1.5" height="1.2" fill="#a8861e"/>
<rect x="638.4" y="573.1" width="1.5" height="1.2" fill="#a8861e"/>
<rect x="685.1" y="570.5" width="1.5" height="1.2" fill="#a8861e"/>
<rect x="675.8" y="560.1" width="1.5" height="1.2" fill="#a8861e"/>
<rect x="665.2" y="560.4" width="1.5" height="1.2" fill="#a8861e"/>
</g></svg>
<svg width="1026" height="665" style="position:absolute;left:0;top:0"><g transform="translate(-254,-55)">
<path d="M1169 61H1163V70H1167" stroke="#a8a8a8" stroke-width="1.3" fill="none"/><path d="M1163 61H1172V65" stroke="#a8a8a8" stroke-width="1.3" fill="none"/>
<circle cx="1171.5" cy="70" r="4" stroke="#a8a8a8" stroke-width="1.4" fill="none"/><path d="M1174.5 73L1178.5 77" stroke="#a8a8a8" stroke-width="2"/>
<circle cx="1194" cy="66.5" r="5.8" stroke="#a8a8a8" stroke-width="1.5" fill="none"/><path d="M1198.3 71L1203 76" stroke="#a8a8a8" stroke-width="2.3"/>
<rect x="1208" y="58" width="22" height="21" fill="#6b2208"/>
<path d="M1219 60.5V76.5M1211 68.5H1227" stroke="#a8a8a8" stroke-width="1.3"/>
<path d="M1216.5 63L1219 60L1221.5 63ZM1216.5 74L1219 77L1221.5 74ZM1213.5 66L1210.5 68.5L1213.5 71ZM1224.5 66L1227.5 68.5L1224.5 71Z" fill="#a8a8a8" stroke="#a8a8a8" stroke-width="1"/>
<path d="M1237.5 64A7 7 0 1 1 1237 72" stroke="#a8a8a8" stroke-width="1.5" fill="none"/><path d="M1235 60.5L1236.5 65.5L1241 63.5" stroke="#a8a8a8" stroke-width="1.4" fill="none"/>
<path d="M1264 65L1260 61M1260 64V61H1263" stroke="#a8a8a8" stroke-width="1.3" fill="none"/>
<path d="M1271 65L1275 61M1275 64V61H1272" stroke="#a8a8a8" stroke-width="1.3" fill="none"/>
<path d="M1264 72L1260 76M1260 73V76H1263" stroke="#a8a8a8" stroke-width="1.3" fill="none"/>
<path d="M1271 72L1275 76M1275 73V76H1272" stroke="#a8a8a8" stroke-width="1.3" fill="none"/>
<text x="286.5" y="659.5" font-family="Liberation Sans" font-size="7" fill="#1a1a1a">Z</text>
<text x="313" y="682" font-family="Liberation Sans" font-size="7" fill="#1a1a1a">Y</text>
<path d="M287 688V669" stroke="#1010ff" stroke-width="1.6"/><path d="M284.5 672L287 664L289.5 672Z" fill="#1010ff"/>
<path d="M288 687L304 685.5" stroke="#10a010" stroke-width="1.6"/><path d="M302 683L310 685L302 688Z" fill="#10a010"/>
<path d="M287.5 688.5L294 693.5" stroke="#ee1010" stroke-width="3" stroke-linecap="round"/>
<text x="297" y="691" font-family="Liberation Sans" font-size="6" fill="#222">X</text>
<circle cx="286.5" cy="687.5" r="1.6" fill="#909090"/>
<ellipse cx="1228" cy="687" rx="42" ry="15.5" fill="#5d6b7a"/>
<ellipse cx="1228" cy="684" rx="30" ry="10.5" fill="#46607a"/>
<path d="M1206 648.5L1236.3 647L1252 652.8L1250.7 687.6L1215.7 693.3L1207 678.8Z" fill="#1f2b39"/>
<path d="M1206 648.5L1236.3 647L1252 652.8L1214.5 654Z" fill="#2c3846"/>
<path d="M1206 648.5L1214.5 654V693M1214.5 654L1252 652.8M1236.3 647V681M1207 678.8L1236.3 681L1250.7 687.6" stroke="#141c26" stroke-width=".8" fill="none"/>
<text x="1227" y="671" font-family="Liberation Sans" font-size="6" fill="#d8dde4">View</text>
<text x="1226" y="679" font-family="Liberation Sans" font-size="6" font-weight="bold" fill="#d8dde4">WEST</text>
<text x="1186" y="689" font-family="Liberation Sans" font-size="6" font-weight="bold" fill="#222" transform="rotate(-70 1188 686)">S</text>
<text x="1241" y="702" font-family="Liberation Sans" font-size="6" font-weight="bold" fill="#222" transform="rotate(-15 1244 699)">E</text>
<text x="1257" y="679" font-family="Liberation Sans" font-size="6" font-weight="bold" fill="#222" transform="rotate(70 1259 676)">N</text>
</g></svg>
</div>
<div class="a" style="left:446px;top:129px;width:390px;height:427px;border-radius:7px;box-shadow:0 1px 5px 1px rgba(0,0,0,.35)"></div>
<div class="a" style="left:446px;top:129px;width:390px;height:427px;border-radius:7px;background:#f9f9f9;overflow:hidden">
<div class="a" style="left:0;top:0;width:390px;height:19.5px;background:#f3f3f3"></div>
</div>
<div class="a" style="left:453px;top:134px;width:8px;height:8px;border:2px solid #5cc8ea;border-radius:2px;background:#d8f0e8"></div>
<div class="t" style="left:466px;top:135px;color:#8a8a8a;font-size:9.5px">Cloud Manager</div>
<div class="a" style="left:756px;top:138px;width:8px;height:1px;background:#999"></div>
<div class="a" style="left:786px;top:135px;width:7px;height:7px;border:1px solid #8a8a8a;border-radius:1px"></div>
<svg class="a" style="left:816.5px;top:134.5px" width="9" height="9"><path d="M0.8 0.8L7.8 7.8M7.8 0.8L0.8 7.8" stroke="#8a8a8a" stroke-width="1"/></svg>
<div class="a" style="left:524px;top:157px;width:55px;height:14px;background:#ececec;border:1px solid #c0c0c0"></div>
<div class="a" style="left:453px;top:170px;width:376px;height:380px;background:#fff;border:1px solid #d4d4d4"></div>
<div class="a" style="left:453px;top:155px;width:72px;height:17px;background:#fff;border:1px solid #d4d4d4;border-bottom:none"></div>
<div class="t" style="left:458px;top:158.5px;font-size:9.5px">Activity Summary</div>
<div class="t" style="left:528px;top:158.5px;font-size:9.5px;transform:scaleX(.835)">Run Manager</div>
<div class="a" style="left:462px;top:193.5px;width:6px;height:1px;background:#c4c4c4"></div>
<div class="a" style="left:497px;top:193.5px;width:323px;height:1px;background:#c4c4c4"></div>
<div class="t" style="left:470px;top:191px;font-size:9px">History</div>
<div class="a" style="left:461.5px;top:204.5px;width:359px;height:242px;border:1.5px solid #e4e4e4;border-radius:4px;background:#fff"></div>
<svg class="a" style="left:469px;top:211px" width="17" height="18"><circle cx="8" cy="8.5" r="7.3" fill="#2a7ad0"/><circle cx="8" cy="7.5" r="5.5" fill="#4c98e4" opacity=".5"/><path d="M4.5 8.5L7 11L11.5 5.5" stroke="#fff" stroke-width="2" fill="none"/></svg>
<div class="t" style="left:492px;top:210.4px;font-size:8.5px;color:#222">132 simulations were completed.</div>
<div class="t" style="left:499px;top:221.8px;font-size:8.5px;color:#777">132 credits used</div>
<div class="t" style="left:535px;top:235.4px;font-size:8.5px;color:#8a8a8a;transform:scaleX(.83)">VM Region: <span style="color:#555">US East 2</span> | CPU Cores per VM: <span style="color:#555">32</span> | RAM per VM: <span style="color:#555">8GB</span></div>
<svg class="a" style="left:446px;top:129px" width="390" height="427"><g transform="translate(-446,-129)" font-family="Liberation Sans" font-size="6.8" fill="#707070">
<path d="M488 418.5H790" stroke="#efefef" stroke-width="1"/>
<text x="485" y="420.7" text-anchor="end">0</text>
<path d="M488 394.5H790" stroke="#efefef" stroke-width="1"/>
<text x="485" y="396.7" text-anchor="end">10</text>
<path d="M488 370.5H790" stroke="#efefef" stroke-width="1"/>
<text x="485" y="372.7" text-anchor="end">20</text>
<path d="M488 346.5H790" stroke="#efefef" stroke-width="1"/>
<text x="485" y="348.7" text-anchor="end">30</text>
<path d="M488 322.5H790" stroke="#efefef" stroke-width="1"/>
<text x="485" y="324.7" text-anchor="end">40</text>
<path d="M488 298.5H790" stroke="#efefef" stroke-width="1"/>
<text x="485" y="300.7" text-anchor="end">50</text>
<path d="M488 274.5H790" stroke="#efefef" stroke-width="1"/>
<text x="485" y="276.7" text-anchor="end">60</text>
<path d="M488 250.5H790" stroke="#efefef" stroke-width="1"/>
<text x="485" y="252.7" text-anchor="end">70</text>
<path d="M490.5 248V420" stroke="#d8d8d8"/>
<path d="M612 248V420M733.5 248V420" stroke="#e6e6e6"/>
<text x="490.5" y="431" text-anchor="middle">0</text>
<text x="612" y="431" text-anchor="middle">1000</text>
<text x="733.5" y="431" text-anchor="middle">2000</text>
<text x="793" y="423.7">0</text>
<text x="793" y="389.09999999999997">20</text>
<text x="793" y="354.5">40</text>
<text x="793" y="319.9">60</text>
<text x="793" y="285.3">80</text>
<text x="793" y="250.7">100</text>
<text x="639" y="437.5" text-anchor="middle" font-size="6.8" transform="translate(639,0) scale(.92,1) translate(-639,0)">Elapsed Time (s)</text>
<text transform="translate(475.5,334) rotate(-90)" text-anchor="middle" font-size="6.8">&#35; Virtual Machines</text>
<text transform="translate(811.5,333) rotate(-90)" text-anchor="middle" font-size="6.8">Progress</text>
<path d="M490.5 404 L514 404 L514 370.5 L535.3 370.5 L535.3 382.5 L546 382.5 L546 370.5 L558.3 370.5 L558.3 284.1 L570 284.1 L570 274.5 L582.4 274.5" stroke="#3d88c4" stroke-width="1.4" stroke-dasharray="1.5 1.5" fill="none"/>
<path d="M490.5 418.5 L494 418.5 L494 404 L525.2 404 L525.2 370.5 L535.3 370.5 L535.3 404 L546 404 L546 382.5 L558.3 382.5 L558.3 370.5 L570 370.5 L570 284.1 L582.4 284.1 L582.4 274.5 L715.4 274.5 L715.4 277.5 L718 277.5 L718 280.8 L721.6 280.8 L721.6 286.2 L724.1 286.2 L724.1 297.8 L726.6 297.8 L726.6 302.8 L735.3 302.8 L735.3 305.5 L738.2 305.5 L738.2 310 L745.7 310 L745.7 312.5 L752.5 312.5 L752.5 319.6 L757.5 319.6 L757.5 327 L767.3 327 L767.3 346.4 L769.6 346.4 L769.6 384.4 L772.4 384.4 L772.4 391.8 L779.7 391.8 L779.7 408.3 L783.3 408.3 L783.3 411.2 L786.5 411.2 L786.5 414.1 L787.5 414.1 L787.5 418.5" stroke="#4a92ca" stroke-width="1.3" fill="none"/>
<path d="M511.2 418.3 L520.6 415.2 L536.2 412 L551.8 408.9 L563.5 407 L573.6 402.3 L583.8 399.2 L590.8 392.9 L604.8 379.3 L612 372.1 L680 308.3 L715.5 275.8 L733.6 263.6 L750 253.3 L760 249.1 L772 247.9 L787.6 247.6" stroke="#ff5ab9" stroke-width="1.3" fill="none" stroke-linejoin="round"/>
</g></svg>
<div class="a" style="left:1280px;top:55px;width:1px;height:665px;background:#a8a8a8;z-index:6"></div>
<div class="a" style="left:1279px;top:55px;width:1px;height:665px;background:rgba(0,0,0,.35);z-index:6"></div>
<div class="a" style="left:1281px;top:0;width:1px;height:722px;background:#808080;z-index:6"></div>
</body></html>
